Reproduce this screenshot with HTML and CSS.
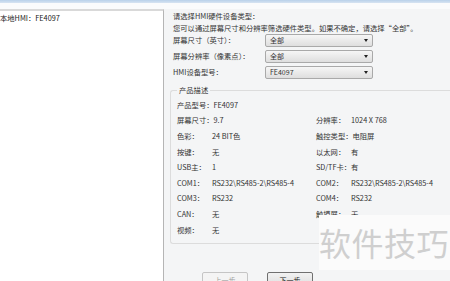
FILE: index.html
```
<!DOCTYPE html>
<html>
<head>
<meta charset="utf-8">
<title>HMI</title>
<link rel="stylesheet" href="styles.css">
</head>
<body>
<div class="titlebar"></div>
<div class="dialog">
	<div class="tree">本地HMI：FE4097</div>
	<div class="wizard">
		<p class="intro">请选择HMI硬件设备类型：</p>
		<p class="intro">您可以通过屏幕尺寸和分辨率筛选硬件类型。如果不确定，请选择“全部”。</p>
		<div class="field"><span class="flabel">屏幕尺寸（英寸）：</span><div class="combo">全部<span class="arrow"></span></div></div>
		<div class="field"><span class="flabel">屏幕分辨率（像素点）：</span><div class="combo">全部<span class="arrow"></span></div></div>
		<div class="field"><span class="flabel">HMI设备型号：</span><div class="combo">FE4097<span class="arrow"></span></div></div>

		<fieldset class="group">
			<legend>产品描述</legend>
			<div class="specs">
				<div class="row"><span>产品型号：FE4097</span></div>
				<div class="row"></div>
				<div class="row"><span>屏幕尺寸：9.7</span></div>
				<div class="row"><span class="k">分辨率：</span><span>1024 X 768</span></div>
				<div class="row"><span class="k">色彩：</span><span>24 BIT色</span></div>
				<div class="row"><span>触控类型：电阻屏</span></div>
				<div class="row"><span class="k">按键：</span><span>无</span></div>
				<div class="row"><span class="k">以太网：</span><span>有</span></div>
				<div class="row"><span class="k">USB主：</span><span>1</span></div>
				<div class="row"><span>SD/TF卡：有</span></div>
				<div class="row"><span class="k">COM1：</span><span>RS232\RS485-2\RS485-4</span></div>
				<div class="row"><span class="k">COM2：</span><span>RS232\RS485-2\RS485-4</span></div>
				<div class="row"><span class="k">COM3：</span><span>RS232</span></div>
				<div class="row"><span class="k">COM4：</span><span>RS232</span></div>
				<div class="row"><span class="k">CAN：</span><span>无</span></div>
				<div class="row"><span class="k">触摸屏：</span><span>无</span></div>
				<div class="row"><span class="k">视频：</span><span>无</span></div>
			</div>
		</fieldset>

		<div class="buttons">
			<button class="btn" disabled>上一步</button>
			<button class="btn">下一步</button>
		</div>
	</div>
</div>
<div class="watermark">软件技巧</div>
</body>
</html>
```
FILE: styles.css
```
html, body {
	margin: 0;
	padding: 0;
}

body {
	width: 450px;
	height: 281px;
	overflow: hidden;
	position: relative;
	background: #f4f5f6;
	font-family: "Noto Sans CJK SC", "Liberation Sans", sans-serif;
	font-size: 7.3px;
	color: #333;
}

.titlebar {
	height: 3px;
	background: linear-gradient(#b9d1ea, #d7e4f2);
	border-bottom: 6px solid #fafbfc;
}

.dialog {
	display: flex;
	height: 272px;
}

/* || left tree */

.tree {
	flex: 0 0 163px;
	background: white;
	border-top: 2px solid #d9d9d9;
	border-right: 1px solid #b5b5b5;
	padding-top: 2px;
	line-height: 11px;
	color: #222;
}

/* || wizard page */

.wizard {
	flex: 1;
	min-width: 0;
	padding: 1px 0 0 9px;
	position: relative;
}

.intro {
	margin: 0;
	line-height: 12px;
}

.field {
	display: flex;
	align-items: center;
	height: 16px;
}

.field:first-of-type {
	margin-top: -2px;
}

.flabel {
	width: 92px;
}

.combo {
	width: 102px;
	height: 11px;
	line-height: 11px;
	padding-left: 4px;
	border: 1px solid #a9a9a9;
	border-radius: 2px;
	background: linear-gradient(#f6f6f6, #dedede);
	position: relative;
	font-size: 7px;
}

.arrow {
	position: absolute;
	right: 4px;
	top: 4px;
	border-left: 2px solid transparent;
	border-right: 2px solid transparent;
	border-top: 3px solid #222;
}

.group {
	margin: 5px 0 0 -3px;
	padding: 2px 0 6px 6px;
	border: 1px solid #dcdcdc;
	border-radius: 3px;
	border-right: none;
	width: 290px;
}

.group legend {
	padding: 0 2px;
	line-height: 10px;
}

.specs {
	display: grid;
	grid-template-columns: 139px 1fr;
}

.row {
	display: flex;
	height: 15.6px;
	align-items: center;
	white-space: nowrap;
}

.row .k {
	width: 35px;
}

/* || buttons */

.buttons {
	display: flex;
	gap: 19px;
	margin: 28px 0 0 29px;
}

.btn {
	width: 46px;
	height: 16px;
	font-family: inherit;
	font-size: 7px;
	color: #222;
	border: 1px solid #707070;
	border-radius: 2px;
	background: linear-gradient(#f2f2f2, #dddddd);
	padding: 0;
}

.btn:disabled {
	color: #a0a0a0;
	border-color: #c5c5c5;
	background: #f4f4f4;
}

/* || watermark over the page */

.watermark {
	position: absolute;
	left: 319px;
	top: 215px;
	width: 131px;
	height: 55px;
	background: #fbfbfb;
	color: #cfcfcf;
	font-size: 32px;
	line-height: 55px;
	letter-spacing: 0.5px;
}
```
